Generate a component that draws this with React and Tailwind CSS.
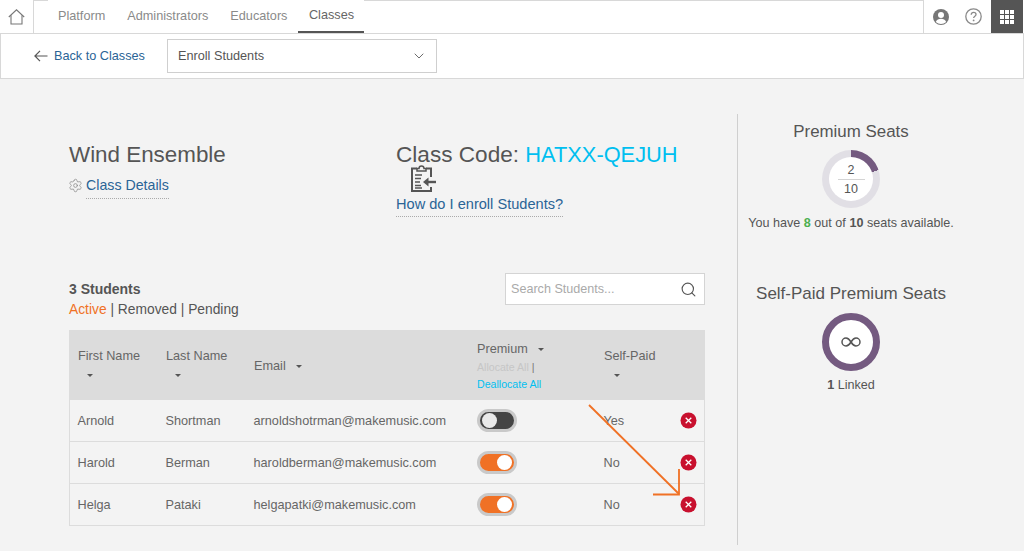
import React from "react";
import { ChevronDown, Search, Settings } from "lucide-react";

function Caret() {
  return <span className="inline-block w-0 h-0 border-x-[3.5px] border-x-transparent border-t-[3.5px] border-t-[#555]" />;
}

function Toggle({ on }) {
  return (
    <div className={"w-[40px] h-[23px] rounded-full border-[3px] border-[#c9c9c9] flex items-center px-[2px] " + (on ? "bg-[#f07125] justify-end" : "bg-[#444444] justify-start")}>
      <div className={"w-[15px] h-[15px] rounded-full " + (on ? "bg-white" : "bg-[#e9e9e9]")} />
    </div>
  );
}

function RemoveBtn() {
  return (
    <svg width="17" height="17" viewBox="0 0 17 17">
      <circle cx="8.5" cy="8.5" r="8" fill="#c8102e" />
      <path d="M5.7 5.7l5.6 5.6M11.3 5.7l-5.6 5.6" stroke="#fff" strokeWidth="1.3" />
    </svg>
  );
}

const rows = [
  ["Arnold", "Shortman", "arnoldshotrman@makemusic.com", false, "Yes"],
  ["Harold", "Berman", "haroldberman@makemusic.com", true, "No"],
  ["Helga", "Pataki", "helgapatki@makemusic.com", true, "No"],
];

const grid = "grid grid-cols-[88px_88px_223px_127px_75px_33px]";

export default function App() {
  return (
    <div className="relative w-[1024px] h-[551px] overflow-hidden bg-[#f3f3f3] text-[#555] font-['Liberation_Sans',Arial,sans-serif]">
      {/* top nav */}
      <div className="flex h-[34px] bg-white border-b border-[#d8d8d8]">
        <div className="w-[34px] border-r border-[#d8d8d8] flex items-center justify-center">
          <svg width="17" height="16" viewBox="0 0 17 16" fill="none" stroke="#777" strokeWidth="1.1">
            <path d="M0.8 8L8.5 0.8L16.2 8" />
            <path d="M3 6.2V15H14V6.2" />
          </svg>
        </div>
        <div className="w-[890px] border-r border-[#d8d8d8] flex text-[12.7px] text-[#8a8a8a]">
          <div className="w-[14px] border-t border-[#d8d8d8]" />
          <div className="pl-[10px] pr-[11px] pt-[1px] h-[33px] flex items-center">Platform</div>
          <div className="px-[11px] pt-[1px] h-[33px] flex items-center">Administrators</div>
          <div className="px-[11px] pt-[1px] h-[33px] flex items-center">Educators</div>
          <div className="w-[66px] pt-[1px] h-[33px] flex items-center justify-center border-b-2 border-[#555] text-[#666]">Classes</div>
          <div className="flex-1 border-t border-[#d8d8d8]" />
        </div>
        <div className="w-[67px] flex items-center justify-between pl-[9px] pr-[9px]">
          <svg width="16" height="16" viewBox="0 0 16 16">
            <circle cx="8" cy="8" r="8" fill="#777" />
            <circle cx="8" cy="6" r="3" fill="#fff" />
            <path d="M2.8 13c.8-2.4 3-3.2 5.2-3.2s4.400.8 5.200 3.200A8 8 0 0 1 8 15a8 8 0 0 1-5.200-2z" fill="#fff" />
          </svg>
          <svg width="17" height="17" viewBox="0 0 17 17" fill="none">
            <circle cx="8.500" cy="8.500" r="7.700" stroke="#8a8a8a" strokeWidth="1.300" />
            <path d="M6.200 6.700c0-1.500 1-2.400 2.400-2.400s2.400.9 2.400 2.100c0 1.800-2.400 1.900-2.400 3.700" stroke="#8a8a8a" strokeWidth="1.300" />
            <circle cx="8.600" cy="12.400" r=".9" fill="#8a8a8a" />
          </svg>
        </div>
        <div className="w-[32px] h-[33px] bg-[#555] flex items-center justify-center">
          <div className="grid grid-cols-3 gap-[1px]">
            {Array.from({ length: 9 }).map((_, i) => (
              <div key={i} className="w-[4px] h-[4px] bg-white" />
            ))}
          </div>
        </div>
      </div>

      {/* sub bar */}
      <div className="h-[45px] bg-white border-b border-x border-[#d8d8d8] flex items-center pl-[33px] pb-[1px]">
        <svg width="14" height="12" viewBox="0 0 14 12" fill="none" stroke="#555" strokeWidth="1.200">
          <path d="M13.500 6H1M6 .8L.9 6L6 11.200" />
        </svg>
        <span className="ml-[6px] pt-[2px] text-[12.7px] text-[#2a6496]">Back to Classes</span>
        <div className="ml-[22px] w-[270px] h-[34px] border border-[#cfcfcf] flex items-center justify-between pl-[10px] pr-[9px] text-[12.7px]">
          <span className="pt-[2px]">Enroll Students</span>
          <ChevronDown size={16} strokeWidth={1.300} />
        </div>
      </div>

      {/* main */}
      <div className="flex pt-[35px]">
        <div className="ml-[69px] w-[636px] pt-[27px]">
          <div className="flex h-[132px]">
            <div className="w-[327px]">
              <div className="text-[22.4px] leading-[28px]">Wind Ensemble</div>
              <div className="flex mt-[8px] items-start">
                <Settings size={15} strokeWidth={1.200} className="text-[#888] mt-[1px] ml-[-1px]" />
                <span className="ml-[3px] text-[14.2px] leading-[17px] text-[#2a6496] pb-[4px] border-b border-dotted border-[#aaa]">Class Details</span>
              </div>
            </div>
            <div>
              <div className="text-[22.6px] leading-[28px] whitespace-nowrap">Class Code: <span className="text-[21.8px] text-[#00bff0]">HATXX-QEJUH</span></div>
              <svg width="25" height="27" viewBox="0 0 25 27" fill="none" className="ml-[15px] -mt-[4px] block">
                <path d="M6 3.500H1V26H20V22M20 12V3.500H15" stroke="#555" strokeWidth="2" />
                <path d="M6 6V3.500H8C8 0 13 0 13 3.500H15V6Z" stroke="#555" strokeWidth="1.500" />
                <path d="M4 10h7M4 13.500h6M4 17h5M4 20.500h6M4 23h7" stroke="#555" strokeWidth="1.300" />
                <path d="M25 17H16" stroke="#555" strokeWidth="2.400" />
                <path d="M17.500 12.500L12 17L17.500 21.500Z" fill="#555" />
              </svg>
              <span className="inline-block mt-[4px] text-[14.6px] leading-[17px] text-[#2a6496] pb-[3px] border-b border-dotted border-[#aaa]">How do I enroll Students?</span>
            </div>
          </div>

          <div className="flex justify-between items-start h-[57px]">
            <div className="pt-[9px]">
              <div className="text-[14px] font-bold leading-[15px]">3 Students</div>
              <div className="text-[13.8px] leading-[17px] mt-[4px]">
                <span className="text-[#f07125]">Active</span> | Removed | Pending
              </div>
            </div>
            <div className="w-[200px] h-[32px] bg-white border border-[#d4d4d4] flex items-center justify-between pl-[5px] pr-[7px]">
              <span className="text-[12.6px] text-[#aaa]">Search Students...</span>
              <Search size={17} strokeWidth={1.600} className="text-[#555]" />
            </div>
          </div>

          {/* table */}
          <div className="border-x border-b border-[#dcdcdc] text-[12.7px]">
            <div className={grid + " h-[70px] bg-[#dcdcdc] -mx-px pl-[9px] text-[#666] leading-[15px]"}>
              <div className="pt-[19px]">
                First Name
                <div className="pl-[9px] h-[15px] pt-[10px] flex"><Caret /></div>
              </div>
              <div className="pt-[19px]">
                Last Name
                <div className="pl-[9px] h-[15px] pt-[10px] flex"><Caret /></div>
              </div>
              <div className="pt-[29px] flex items-start gap-[10px]">
                Email
                <span className="pt-[6px] flex"><Caret /></span>
              </div>
              <div className="pt-[12px]">
                <div className="flex items-start gap-[10px]">Premium<span className="pt-[6px] flex"><Caret /></span></div>
                <div className="text-[10.6px] leading-[17px] mt-[2px] text-[#c6c6c6]">Allocate All <span className="text-[#777]">|</span></div>
                <div className="text-[10.6px] leading-[17px] text-[#00bff0]">Deallocate All</div>
              </div>
              <div className="pt-[19px]">
                Self-Paid
                <div className="pl-[10px] h-[15px] pt-[10px] flex"><Caret /></div>
              </div>
            </div>
            {rows.map((r, i) => (
              <div key={r[0]} className={grid + " pl-[7.5px] items-center text-[#666] " + (i < 2 ? "h-[42px] border-b border-[#dcdcdc]" : "h-[41px]")}>
                <div className="pt-[2px]">{r[0]}</div>
                <div className="pt-[2px]">{r[1]}</div>
                <div className="pt-[2px]">{r[2]}</div>
                <div><Toggle on={r[3]} /></div>
                <div className="pt-[2px]">{r[4]}</div>
                <div className="pl-[1px] flex"><RemoveBtn /></div>
              </div>
            ))}
          </div>
        </div>

        {/* right panel */}
        <div className="ml-[32px] w-[227px] h-[431px] border-l border-[#cfcfcf] flex flex-col items-center">
          <div className="text-[16.9px] leading-[19px] mt-[8px] whitespace-nowrap">Premium Seats</div>
          <div className="mt-[9px] w-[58px] h-[58px] rounded-full bg-[conic-gradient(#745a80_0_20%,#e1dfe5_20%_100%)] flex items-center justify-center">
            <div className="w-[44px] h-[44px] rounded-full bg-white flex flex-col items-center justify-center text-[12.5px] leading-[16px]">
              <div className="w-[27px] text-center border-b border-[#d4d4d4] pb-px">2</div>
              <div className="pt-px">10</div>
            </div>
          </div>
          <div className="mt-[8px] text-[12.6px] leading-[15px] whitespace-nowrap">
            You have <b className="text-[#4caf50]">8</b> out of <b>10</b> seats available.
          </div>
          <div className="text-[17px] leading-[19px] mt-[53px] whitespace-nowrap">Self-Paid Premium Seats</div>
          <div className="mt-[10px] w-[58px] h-[58px] rounded-full border-[7px] border-[#745a80] bg-white flex items-center justify-center">
            <svg width="20" height="10" viewBox="0 0 20 10" fill="none" stroke="#555" strokeWidth="1.500">
              <path d="M10 5C8.500 2.500 7 1 5 1a4 4 0 0 0 0 8c2 0 3.500-1.500 5-4c1.500-2.500 3-4 5-4a4 4 0 0 1 0 8c-2 0-3.500-1.500-5-4Z" />
            </svg>
          </div>
          <div className="mt-[7px] text-[12.6px] leading-[15px]"><b>1</b> Linked</div>
        </div>
      </div>

      {/* annotation arrow */}
      <svg className="absolute left-[580px] top-[400px] pointer-events-none" width="110" height="100" viewBox="0 0 110 100" fill="none" stroke="#f07125" strokeWidth="1.800">
        <path d="M9 5L99 94" />
        <path d="M99 69V94.500H73" />
      </svg>
    </div>
  );
}
